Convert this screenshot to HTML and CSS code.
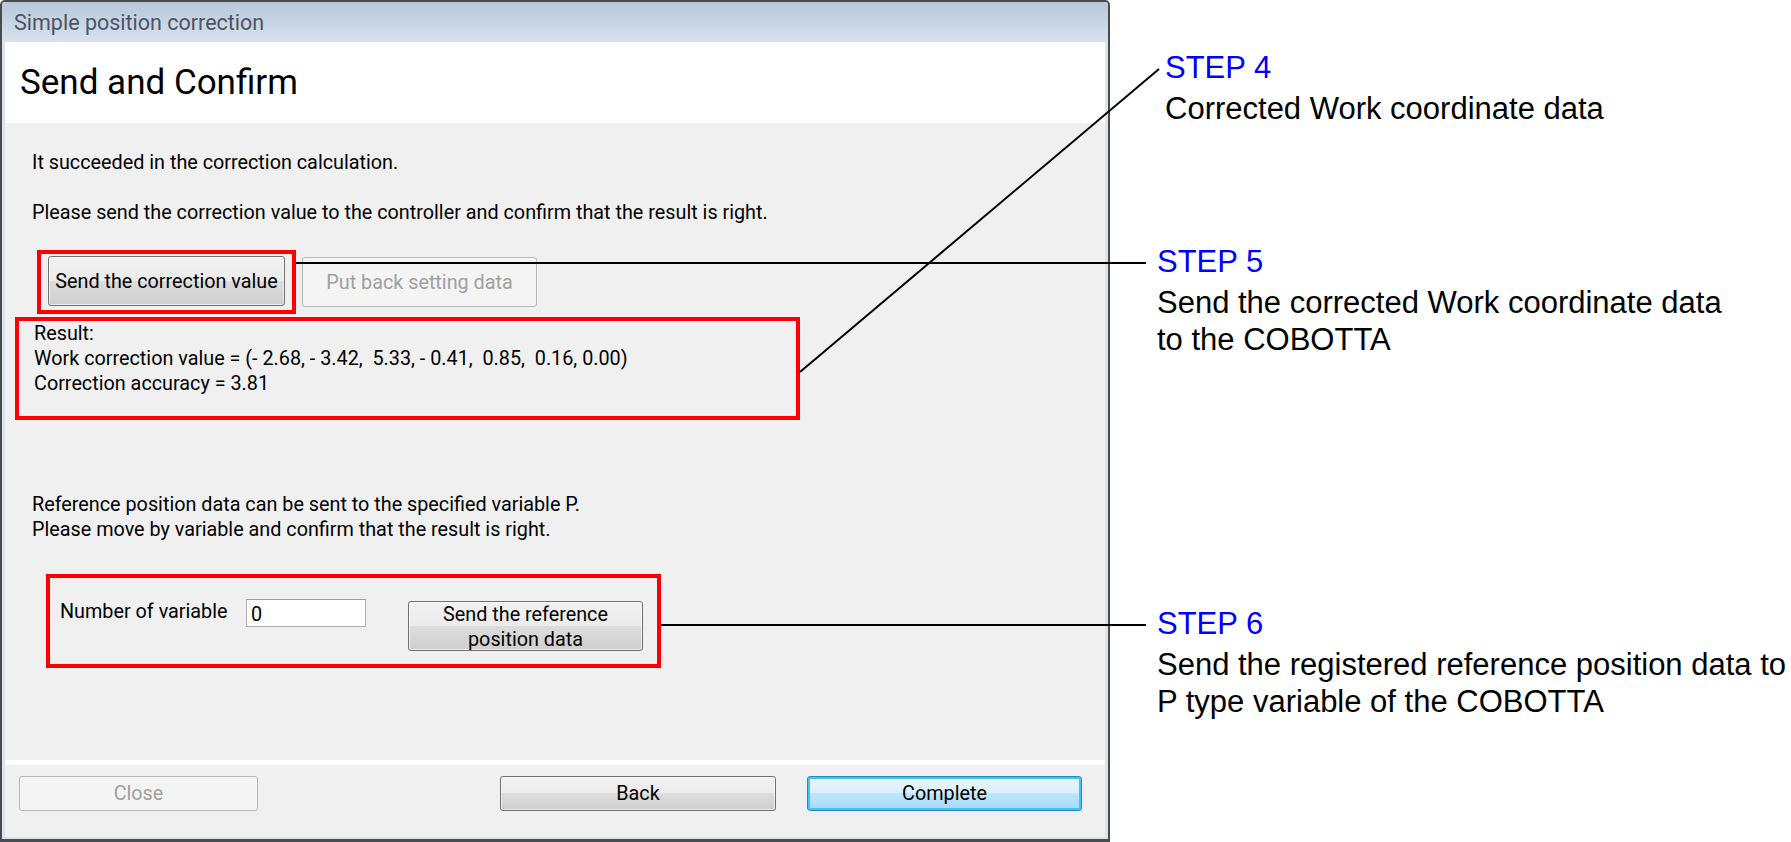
FILE: index.html
```html
<!DOCTYPE html>
<html lang="en">
<head>
    <meta charset="UTF-8">
    <title>Simple position correction</title>
    <link rel="stylesheet" href="styles.css">
</head>
<body>

<div class="page">

    <!-- Dialog window -->
    <div class="window">
        <div class="titlebar">Simple position correction</div>
        <div class="content">
            <div class="header">
                <h1>Send and Confirm</h1>
            </div>

            <div class="main">
                <p class="msg">It succeeded in the correction calculation.</p>
                <p class="msg">Please send the correction value to the controller and confirm that the result is right.</p>

                <div class="btn-row">
                    <div class="mark mark-send">
                        <button class="btn btn-send">Send the correction value</button>
                    </div>
                    <button class="btn btn-putback" disabled>Put back setting data</button>
                </div>

                <div class="mark mark-result">
                    Result:<br>
                    Work correction value = (- 2.68, - 3.42, &nbsp;5.33, - 0.41, &nbsp;0.85, &nbsp;0.16, 0.00)<br>
                    Correction accuracy = 3.81
                </div>

                <p class="msg ref">Reference position data can be sent to the specified variable P.<br>Please move by variable and confirm that the result is right.</p>

                <div class="mark mark-var">
                    <label class="var-label" for="varNum">Number of variable</label>
                    <input id="varNum" class="var-input" type="text" value="0">
                    <button class="btn btn-ref">Send the reference<br>position data</button>
                </div>
            </div>

            <div class="footer">
                <button class="btn btn-close" disabled>Close</button>
                <button class="btn btn-back">Back</button>
                <button class="btn btn-complete">Complete</button>
            </div>
        </div>
    </div>

    <!-- Step notes -->
    <div class="notes">
        <div class="step step4">
            <div class="step-label">STEP 4</div>
            <div class="step-text">Corrected Work coordinate data</div>
        </div>
        <div class="step step5">
            <div class="step-label">STEP 5</div>
            <div class="step-text">Send the corrected Work coordinate data<br>to the COBOTTA</div>
        </div>
        <div class="step step6">
            <div class="step-label">STEP 6</div>
            <div class="step-text">Send the registered reference position data to<br>P type variable of the COBOTTA</div>
        </div>
    </div>

    <!-- Leader lines from the marked areas to the notes -->
    <svg class="leaders" width="1791" height="842" viewBox="0 0 1791 842">
        <line x1="800" y1="372" x2="1159" y2="69"/>
        <line x1="296" y1="263" x2="1146" y2="263"/>
        <line x1="661" y1="625" x2="1146" y2="625"/>
    </svg>

</div>

</body>
</html>
```

FILE: styles.css
```css
/* Page */
body {
    margin: 0;
    background-color: #fff;
    font-family: Roboto, "Noto Sans", sans-serif;
    color: #000;
    overflow: hidden;
}

.page {
    position: relative;
    display: flex;
    width: 1791px;
    height: 842px;
}

/* Window frame */
.window {
    flex-shrink: 0;
    width: 1110px;
    height: 842px;
    box-sizing: border-box;
    border: 2px solid #4b4b4b;
    border-bottom-width: 3px;
    border-radius: 5px 5px 0 0;
    padding: 0 3px 2px;
    background-color: #d9e4ef;
    display: flex;
    flex-direction: column;
}

.titlebar {
    flex-shrink: 0;
    height: 40px;
    line-height: 41px;
    margin: 0 -3px;
    padding-left: 12px;
    font-size: 21.5px;
    color: #4f5263;
    background: linear-gradient(#b8c8d9, #d6e2ee);
    border-radius: 3px 3px 0 0;
}

.content {
    flex: 1;
    display: flex;
    flex-direction: column;
    background-color: #f0f0f0;
}

/* Header */
.header {
    flex-shrink: 0;
    height: 81px;
    background-color: #fff;
}

.header h1 {
    margin: 0;
    padding-left: 15px;
    font-size: 35px;
    font-weight: 400;
    line-height: 81px;
}

/* Main area */
.main {
    flex: 1;
    padding: 27px 0 0 27px;
    font-size: 19.8px;
    line-height: 25px;
}

.msg {
    margin: 0 0 25px;
}

.btn-row {
    display: flex;
    align-items: flex-start;
    margin-top: 2px;
}

/* Red highlight boxes */
.mark {
    border: 4px solid #ff0000;
    box-sizing: border-box;
}

.mark-send {
    margin-left: 5px;
    padding: 2px 7px 4px;
}

.mark-result {
    width: 785px;
    height: 103px;
    margin: 3px 0 0 -17px;
    padding-left: 15px;
}

.ref {
    margin: 72px 0 32px;
}

.mark-var {
    width: 615px;
    height: 94px;
    margin-left: 14px;
    padding: 21px 0 0 10px;
    display: flex;
    align-items: flex-start;
}

.var-label {
    width: 186px;
}

.var-input {
    width: 120px;
    height: 28px;
    box-sizing: border-box;
    border: 1px solid #abadb3;
    border-top-color: #999ca6;
    padding: 2px 4px 0;
    font: inherit;
    background-color: #fff;
}

/* Buttons */
.btn {
    padding: 0;
    height: 35px;
    font-family: inherit;
    font-size: 19.8px;
    color: #000;
    border: 1px solid #707070;
    border-radius: 3px;
    background: linear-gradient(#f2f2f2 0%, #ebebeb 50%, #dddddd 50%, #cfcfcf 100%);
    box-shadow: inset 0 0 0 1px rgba(255, 255, 255, 0.6);
}

.btn:disabled {
    color: #a0a0a0;
    border-color: #b5b8ba;
    background: #f4f4f4;
    box-shadow: none;
}

.btn-send {
    width: 237px;
    height: 50px;
}

.btn-putback {
    width: 235px;
    height: 50px;
    margin: 7px 0 0 6px;
}

.btn-ref {
    width: 235px;
    height: 50px;
    margin: 2px 0 0 42px;
    line-height: 25px;
}

/* Footer */
.footer {
    flex-shrink: 0;
    height: 77px;
    box-sizing: border-box;
    border-top: 5px solid #fff;
    padding: 11px 23px 0 14px;
    display: flex;
    align-items: flex-start;
}

.btn-close {
    width: 239px;
    margin-right: auto;
}

.btn-back {
    width: 276px;
}

.btn-complete {
    width: 275px;
    margin-left: 31px;
    border-color: #2c86c2;
    background: linear-gradient(#eaf6fd 0%, #d9f0fc 50%, #bee6fd 50%, #a7d9f5 100%);
    box-shadow: inset 0 0 0 2px #46c3f3;
}

/* Step notes on the right */
.notes {
    flex: 1;
    padding: 49px 0 0 47px;
    font-family: "Liberation Sans", Arial, sans-serif;
    font-size: 31px;
    line-height: 37px;
    white-space: nowrap;
}

.step-label {
    color: #0000ff;
    margin-bottom: 4px;
}

.step4 {
    margin-left: 8px;
}

.step5 {
    margin-top: 116px;
}

.step6 {
    margin-top: 247px;
}

/* Leader lines */
.leaders {
    position: absolute;
    top: 0;
    left: 0;
    pointer-events: none;
}

.leaders line {
    stroke: #000;
    stroke-width: 2;
}
```
